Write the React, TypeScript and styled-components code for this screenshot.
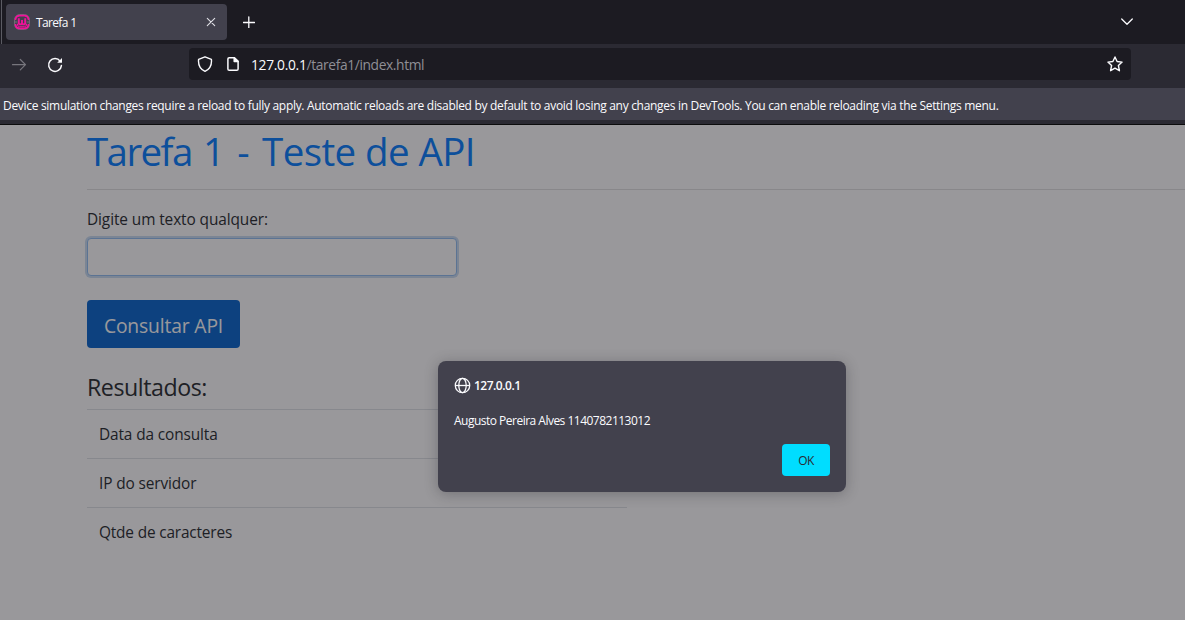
import React from "react";
import styled, { createGlobalStyle } from "styled-components";

const GlobalStyle = createGlobalStyle`
  * { box-sizing: border-box; }
  html, body { margin: 0; padding: 0; background: #fff; overflow: hidden; }
  body { font-family: "Open Sans", "Noto Sans", sans-serif; }
  h1, h2, p { margin: 0; font-weight: 400; }
  svg { display: block; flex: none; }
`;

const Window = styled.div`
  width: 1185px;
  height: 620px;
  display: flex;
  flex-direction: column;
  overflow: hidden;
  color: #fbfbfe;
`;

const Text = styled.span<{ $size: number; $spacing?: number }>`
  font-size: ${(p) => p.$size}px;
  letter-spacing: ${(p) => p.$spacing ?? 0}px;
  white-space: pre;
`;

const TabStrip = styled.div`
  height: 44px;
  flex: none;
  display: flex;
  align-items: center;
  padding: 0 51px 0 5px;
  background: linear-gradient(90deg, #1c1b22 1px, #5b5b63 1px, #5b5b63 2px, #1c1b22 2px);
`;

const Tab = styled.div`
  width: 221px;
  height: 36px;
  margin-left: 1px;
  padding: 0 10px 0 8px;
  display: flex;
  align-items: center;
  border-radius: 4px;
  background: #42414d;
`;

const TabTitle = styled(Text)`
  flex: 1;
  margin-left: 6px;
  padding-top: 1px;
  line-height: 17px;
`;

const NewTab = styled.div`
  flex: 1;
  padding-left: 16px;
`;

const Toolbar = styled.div`
  height: 44px;
  flex: none;
  display: flex;
  align-items: center;
  padding-left: 10px;
  background: #2b2a33;
`;

const NavButtons = styled.div`
  width: 179px;
  display: flex;
  gap: 19px;
  padding-bottom: 2px;
`;

const AddressBar = styled.div`
  width: 942px;
  height: 32px;
  margin-top: -4px;
  padding: 0 8px;
  display: flex;
  align-items: center;
  border-radius: 4px;
  background: #1c1b22;
`;

const PageIcon = styled.div`
  margin: 0 12px 0 14px;
`;

const Url = styled(Text)`
  flex: 1;
  padding-top: 2px;
  line-height: 22px;
  color: #8f8f96;
  b { font-weight: 400; letter-spacing: -0.3px; color: #fbfbfe; }
`;

const Notice = styled.div`
  height: 37px;
  flex: none;
  display: flex;
  align-items: center;
  padding: 1px 3px 3px;
  background: #42414d;
  border-bottom: 1px solid #0c0c0d;
  box-shadow: inset 0 -4px #2b2a33;
`;

const Viewport = styled.div`
  position: relative;
  flex: 1;
`;

const Page = styled.main`
  padding-left: 87px;
  color: #212529;
`;

const Title = styled.h1`
  height: 65px;
  padding-top: 2px;
  line-height: 48px;
  color: #007bff;
  border-bottom: 1px solid #e0e0e0;
`;

const Field = styled.label`
  display: block;
  padding-top: 17px;
  line-height: 24px;
`;

const Input = styled.input`
  display: block;
  width: 370px;
  height: 38px;
  margin-top: 6px;
  border: 1px solid #8ebcf0;
  border-radius: 4px;
  outline: none;
  background: #fff;
  box-shadow: 0 0 0 2px #c8dcf3;
`;

const Submit = styled.button`
  display: block;
  width: 153px;
  height: 48px;
  margin-top: 24px;
  padding: 5px 0 0;
  border: 0;
  border-radius: 4px;
  background: #0062cc;
  color: #fff;
  font-family: inherit;
  line-height: 28px;
`;

const Results = styled.section`
  width: 540px;
  padding-top: 23px;
`;

const ResultsTitle = styled.h2`
  height: 38px;
  line-height: 32px;
`;

const ResultRow = styled.div`
  height: 49px;
  padding: 12px 12px 0;
  border-top: 1px solid #dee2e6;
  line-height: 24px;
`;

const Scrim = styled.div`
  position: absolute;
  inset: 0;
  background: rgba(28, 27, 34, 0.45);
`;

const Dialog = styled.div`
  position: absolute;
  left: 438px;
  top: 236px;
  width: 408px;
  height: 131px;
  padding: 15px 16px 16px;
  display: flex;
  flex-direction: column;
  border-radius: 8px;
  background: #42414d;
  box-shadow: 0 2px 14px rgba(28, 27, 34, 0.3);
`;

const DialogOrigin = styled.div`
  display: flex;
  align-items: center;
  gap: 3px;
  height: 18px;
  line-height: 17px;
  font-weight: 600;
`;

const DialogMessage = styled.p`
  height: 18px;
  margin-top: 16px;
  line-height: 18px;
`;

const OkButton = styled.button`
  flex: none;
  width: 48px;
  height: 32px;
  margin-top: 16px;
  padding: 0 0 1px;
  align-self: flex-end;
  border: 0;
  border-radius: 4px;
  background: #00ddff;
  color: #2b2a33;
  font-family: inherit;
`;

const Favicon = () => (
  <svg width="16" height="16" viewBox="0 0 16 16" fill="none" stroke="#f0129a">
    <rect x="0.6" y="0.6" width="14.8" height="14.8" rx="5" stroke="#756b78" strokeWidth="1" />
    <path d="M1.5 6V5Q2 1.8 5.5 1.6h5Q14 1.8 14.5 5v1M1.5 10v1q.5 3.2 4 3.4h5q3.500-.2 4-3.4v-1" strokeWidth="1.7" />
    <path d="M0 8h3.300M12.700 8H16" stroke="#756b78" strokeWidth="1" />
    <path d="M3.500 9.700V11q.4 1.600 2 1.700h5q1.600-.1 2-1.700V9.700" strokeWidth="1" />
    <path d="M4.800 4.300v4.400q0 1.700 1.600 1.700T8 8.700V6v2.700q0 1.700 1.600 1.700t1.600-1.700V4.300" strokeWidth="1.900" />
  </svg>
);

const Close = () => (
  <svg width="12" height="12" viewBox="0 0 12 12" stroke="#e0e0e6" strokeWidth="1.1" strokeLinecap="round">
    <path d="m2.3 2.3 7.4 7.4m0-7.4L2.3 9.7" />
  </svg>
);

const Plus = () => (
  <svg width="12" height="12" viewBox="0 0 12 12" stroke="#fbfbfe" strokeWidth="1.3" strokeLinecap="round">
    <path d="M.3 6.5h11.2M5.8.8v11.2" />
  </svg>
);

const Chevron = () => (
  <svg width="14" height="8" viewBox="0 0 14 8" fill="none" stroke="#fbfbfe" strokeWidth="1.3" strokeLinecap="round" strokeLinejoin="round">
    <path d="m1.7 1 5.3 5.3L12.3 1" />
  </svg>
);

const Forward = () => (
  <svg width="18" height="16" viewBox="0 0 18 16" fill="none" stroke="#77767d" strokeWidth="1.2" strokeLinecap="round" strokeLinejoin="round">
    <path d="M2.5 7.7h12.8M10.3 2.5l5.2 5.2-5.2 5.2" />
  </svg>
);

const Reload = () => (
  <svg width="16" height="16" viewBox="0 0 16 16" fill="none" stroke="#fbfbfe" strokeWidth="1.5" strokeLinecap="round">
    <path d="M13.2 4.2A6.4 6.4 0 1 0 14.4 8.6" />
    <path d="M15 .9v4.8h-4.8Z" fill="#fbfbfe" stroke="none" />
  </svg>
);

const Shield = () => (
  <svg width="16" height="16" viewBox="0 0 16 16" fill="none" stroke="#fbfbfe" strokeWidth="1.4" strokeLinejoin="round">
    <path d="M8 .8 14.4 3.4c.5 4.900-1.3 9.600-6.400 11.900C2.900 13 1.100 8.300 1.600 3.400Z" />
  </svg>
);

const Document = () => (
  <svg width="12" height="14" viewBox="0 0 12 14" fill="none" stroke="#fbfbfe" strokeWidth="1.5" strokeLinejoin="round">
    <path d="M7.4.8H2.2Q.9.8.9 2.1v9.8q0 1.3 1.3 1.3h7.6q1.3 0 1.3-1.3V4.4Z" />
    <path d="M7.2.8v3.8h3.9Z" fill="#fbfbfe" />
  </svg>
);

const Star = () => (
  <svg width="16" height="16" viewBox="0 0 16 16" fill="none" stroke="#fbfbfe" strokeWidth="1.4" strokeLinejoin="round">
    <path d="m8 1 2.1 4.5 5 .6-3.7 3.4 1 5.2L8 12.2l-4.4 2.5 1-5.2L.9 6.1l5-.6Z" />
  </svg>
);

const Globe = () => (
  <svg width="17" height="17" viewBox="0 0 16 16" fill="none" stroke="#fbfbfe" strokeWidth="1.2">
    <circle cx="8" cy="8" r="6.8" />
    <ellipse cx="8" cy="8" rx="3.5" ry="6.8" />
    <path d="M1 8h14" />
  </svg>
);

const rows = [
  { label: "Data da consulta", spacing: -0.12 },
  { label: "IP do servidor", spacing: -0.12 },
  { label: "Qtde de caracteres", spacing: -0.17 },
];

export default function App() {
  return (
    <>
      <GlobalStyle />
      <Window>
        <TabStrip>
          <Tab>
            <Favicon />
            <TabTitle $size={12} $spacing={-0.65}>Tarefa 1</TabTitle>
            <Close />
          </Tab>
          <NewTab><Plus /></NewTab>
          <Chevron />
        </TabStrip>
        <Toolbar>
          <NavButtons>
            <Forward />
            <Reload />
          </NavButtons>
          <AddressBar>
            <Shield />
            <PageIcon><Document /></PageIcon>
            <Url $size={13.8} $spacing={-0.38}><b>127.0.0.1</b>/tarefa1/index.html</Url>
            <Star />
          </AddressBar>
        </Toolbar>
        <Notice>
          <Text $size={12} $spacing={-0.305}>
            Device simulation changes require a reload to fully apply. Automatic reloads are disabled by default to avoid losing any changes in DevTools. You can enable reloading via the Settings menu.
          </Text>
        </Notice>
        <Viewport>
          <Page>
            <Title>
              <Text $size={38.5} $spacing={-1.6}>Tarefa</Text>
              <Text $size={38.5} $spacing={1.2}>{" 1 - "}</Text>
              <Text $size={38.5} $spacing={-0.6}>Teste de API</Text>
            </Title>
            <Field>
              <Text $size={15.4} $spacing={-0.09}>Digite um texto qualquer:</Text>
              <Input />
            </Field>
            <Submit><Text $size={19.3} $spacing={-0.15}>Consultar API</Text></Submit>
            <Results>
              <ResultsTitle><Text $size={23.2} $spacing={-0.45}>Resultados:</Text></ResultsTitle>
              {rows.map((row) => (
                <ResultRow key={row.label}>
                  <Text $size={15.4} $spacing={row.spacing}>{row.label}</Text>
                </ResultRow>
              ))}
            </Results>
          </Page>
          <Scrim />
          <Dialog role="dialog">
            <DialogOrigin>
              <Globe />
              <Text $size={12} $spacing={-0.5}>127.0.0.1</Text>
            </DialogOrigin>
            <DialogMessage><Text $size={12} $spacing={-0.51}>Augusto Pereira Alves 1140782113012</Text></DialogMessage>
            <OkButton><Text $size={12} $spacing={-0.5}>OK</Text></OkButton>
          </Dialog>
        </Viewport>
      </Window>
    </>
  );
}
